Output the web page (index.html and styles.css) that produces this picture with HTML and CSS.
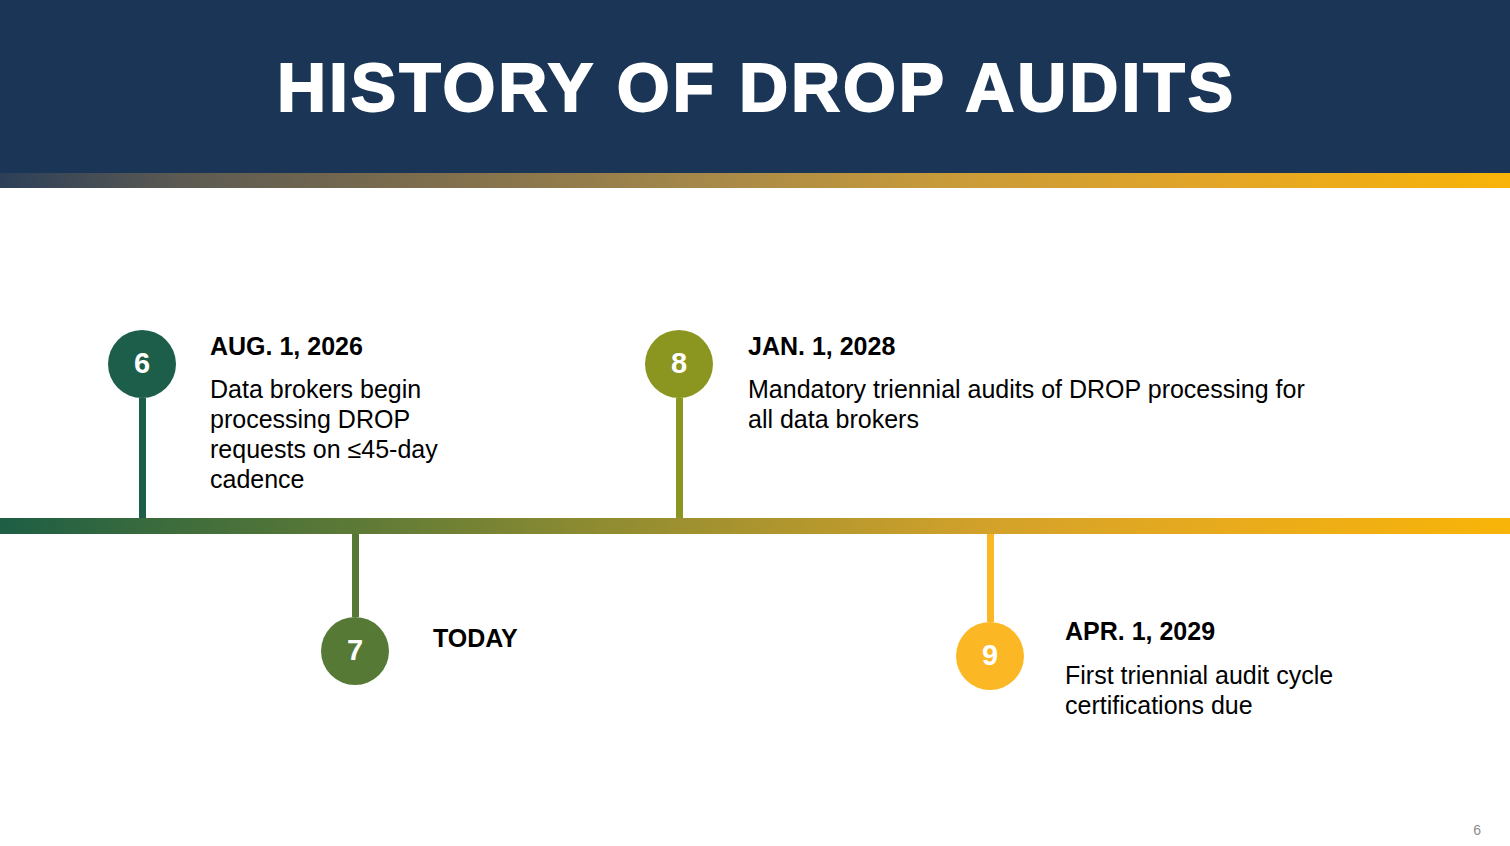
FILE: index.html
```html
<!DOCTYPE html>
<html lang="en">
<head>
<meta charset="utf-8">
<title>History of DROP Audits</title>
<link rel="stylesheet" href="styles.css">
</head>
<body>
<div class="slide">
  <header class="header">
    <h1 class="title">HISTORY OF DROP AUDITS</h1>
  </header>
  <div class="header-band"></div>

  <section class="timeline">
    <div class="row row-top">
      <div class="event event-6">
        <div class="marker">
          <div class="circle c-6">6</div>
          <div class="stem s-6"></div>
        </div>
        <div class="text text-6">
          <div class="date">AUG. 1, 2026</div>
          <p class="desc">Data brokers begin processing DROP requests on ≤45-day cadence</p>
        </div>
      </div>
      <div class="event event-8">
        <div class="marker">
          <div class="circle c-8">8</div>
          <div class="stem s-8"></div>
        </div>
        <div class="text text-8">
          <div class="date">JAN. 1, 2028</div>
          <p class="desc">Mandatory triennial audits of DROP processing for all data brokers</p>
        </div>
      </div>
    </div>

    <div class="axis"></div>

    <div class="row row-bottom">
      <div class="event event-7">
        <div class="marker">
          <div class="stem s-7"></div>
          <div class="circle c-7">7</div>
        </div>
        <div class="text text-7">
          <div class="date">TODAY</div>
        </div>
      </div>
      <div class="event event-9">
        <div class="marker">
          <div class="stem s-9"></div>
          <div class="circle c-9">9</div>
        </div>
        <div class="text text-9">
          <div class="date">APR. 1, 2029</div>
          <p class="desc">First triennial audit cycle certifications due</p>
        </div>
      </div>
    </div>
  </section>

  <footer class="footer">6</footer>
</div>
</body>
</html>
```

FILE: styles.css
```css
* { box-sizing: border-box; }

html, body {
  margin: 0;
  padding: 0;
  background: #ffffff;
}

body {
  font-family: "Liberation Sans", Arial, sans-serif;
  color: #000;
}

.slide {
  width: 1510px;
  height: 846px;
  display: flex;
  flex-direction: column;
  overflow: hidden;
  background: #fff;
}

/* Header */
.header {
  height: 173px;
  background: #1b3556;
  display: flex;
  align-items: center;
  justify-content: center;
}

.title {
  margin: 0;
  color: #fff;
  font-family: "Liberation Sans", Arial, sans-serif;
  font-weight: 700;
  font-size: 68px;
  line-height: 1;
  letter-spacing: 2.95px;
  -webkit-text-stroke: 1.8px #fff;
  padding-left: 3px;
  padding-top: 1px;
}

.header-band {
  height: 15px;
  background: linear-gradient(90deg, #2c3f58 0%, #5c5a52 12%, #7d6d4d 28%, #a2864a 45%, #c79a3a 62%, #e2a528 80%, #f8b408 100%);
}

/* Timeline */
.timeline {
  display: flex;
  flex-direction: column;
  padding-top: 142px;
}

.row {
  display: flex;
}

.row-top {
  height: 188px;
  padding-left: 108px;
  align-items: stretch;
}

.row-bottom {
  padding-left: 321px;
  align-items: flex-start;
}

.event {
  display: flex;
}

.event-6 { width: 537px; }
.event-7 { width: 635px; }

.marker {
  width: 68px;
  flex: none;
  display: flex;
  flex-direction: column;
  align-items: center;
}

.circle {
  width: 68px;
  height: 68px;
  border-radius: 50%;
  flex: none;
  display: flex;
  align-items: center;
  justify-content: center;
  color: #fff;
  font-weight: 700;
  font-size: 29px;
  line-height: 1;
  padding-bottom: 2px;
}

.stem {
  width: 7px;
}

.row-top .stem { flex: 1; }

.c-6, .s-6 { background: #1c5e4a; }
.c-7, .s-7 { background: #567a36; }
.c-8, .s-8 { background: #8a9620; }
.c-9, .s-9 { background: #fbb824; }

.s-7 { height: 83px; }
.s-9 { height: 88px; }

.text {
  font-size: 25px;
  line-height: 30px;
}

.text-6 { margin-left: 34px; width: 250px; padding-top: 1px; }
.text-8 { margin-left: 35px; width: 585px; padding-top: 1px; }
.text-7 { margin-left: 44px; padding-top: 89px; }
.text-9 { margin-left: 41px; width: 300px; padding-top: 82px; }

.date {
  font-weight: 700;
}

.desc {
  margin: 13px 0 0;
}

.text-9 .desc { margin-top: 14px; }

/* Axis line */
.axis {
  height: 16px;
  background: linear-gradient(90deg, #1d5e45 0%, #3f6d3c 12%, #5e7a36 24%, #8a8a32 38%, #b0962e 52%, #d4a22a 66%, #e9ab1c 82%, #f8b408 100%);
}

/* Footer */
.footer {
  margin-top: auto;
  text-align: right;
  font-size: 14px;
  line-height: 16px;
  color: #8c8c8c;
  padding: 0 29px 8px 0;
}
```
